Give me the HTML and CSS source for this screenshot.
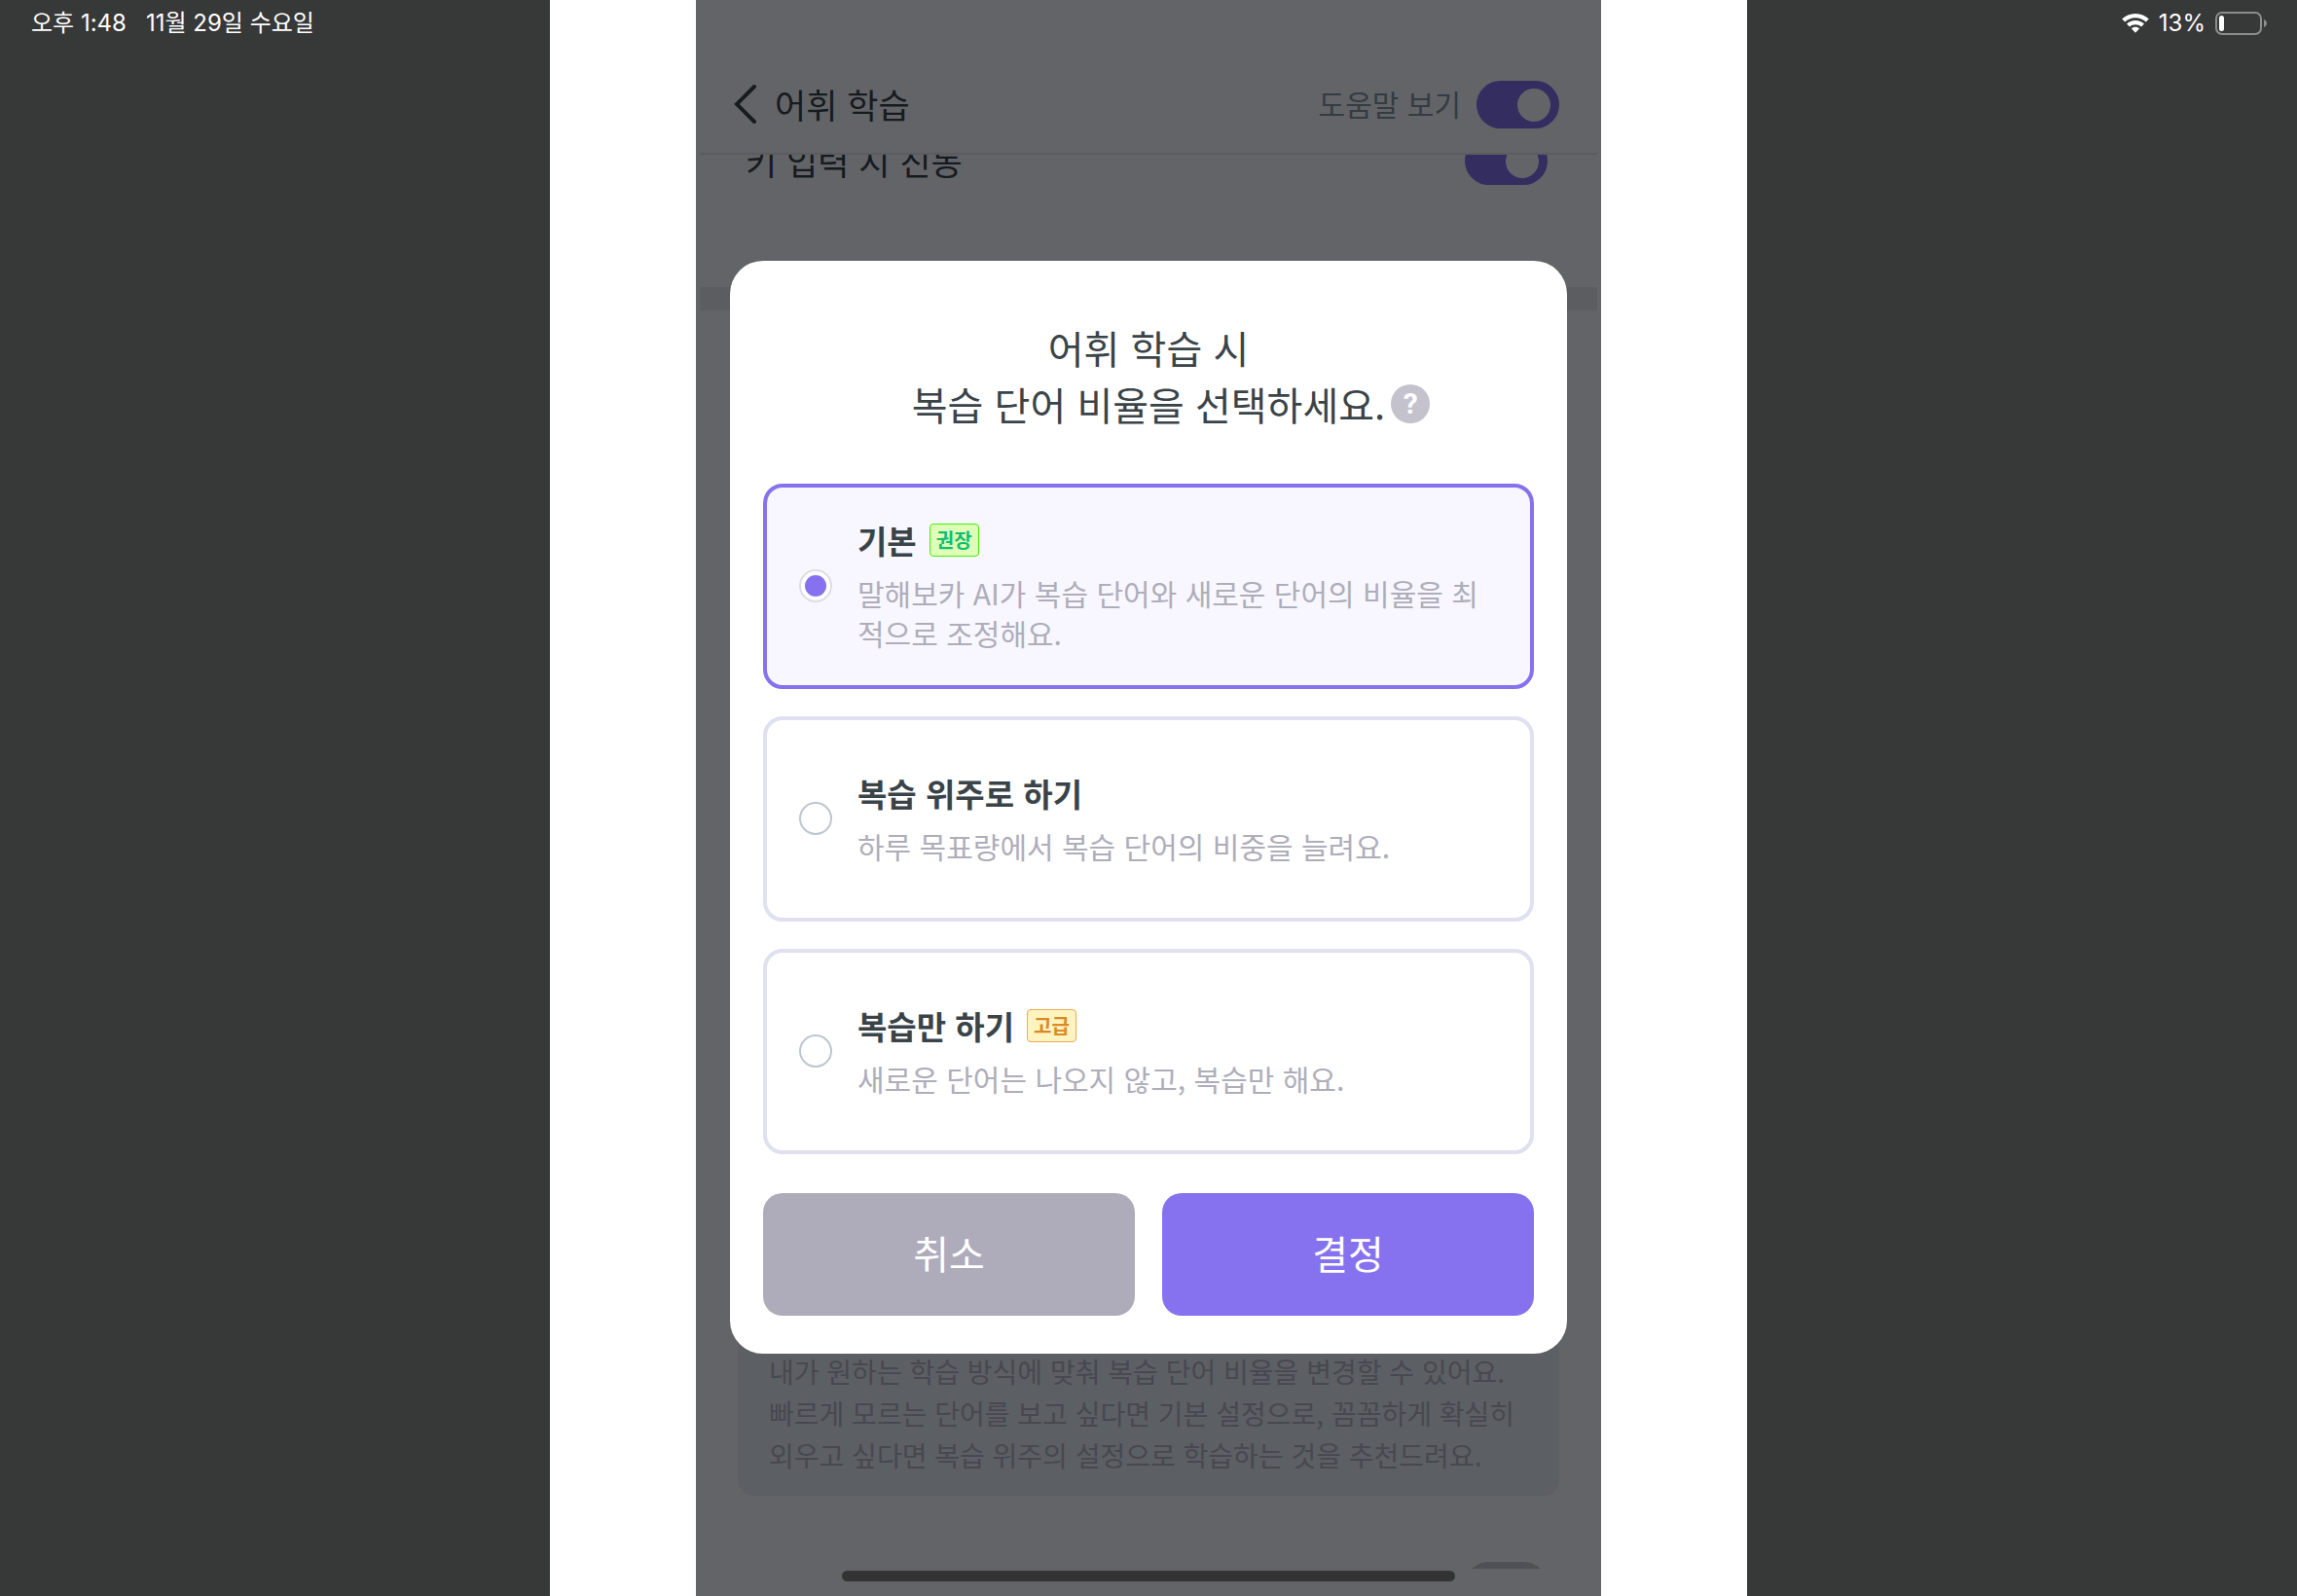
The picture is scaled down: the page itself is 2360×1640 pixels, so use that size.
FILE: index.html
```html
<!DOCTYPE html>
<html lang="ko">
<head>
<meta charset="utf-8">
<meta name="viewport" content="width=device-width, initial-scale=1">
<title>어휘 학습</title>
<link rel="stylesheet" href="styles.css">
</head>
<body>
<div class="status-bar">
  <div class="status-group status-left">
    <span>오후 1:48</span>
    <span>11월 29일 수요일</span>
  </div>
  <div class="status-group">
    <svg class="wifi" width="28" height="20" viewBox="0 0 28 20" aria-hidden="true">
      <path d="M14 0C8.600 0 3.700 2.100 0.200 5.600L3.200 8.600C6 5.800 9.800 4.200 14 4.200S22 5.800 24.800 8.600L27.800 5.600C24.300 2.100 19.400 0 14 0Z"/>
      <path d="M14 7C10.500 7 7.400 8.300 5 10.400L8 13.400C9.600 12 11.700 11.200 14 11.200S18.400 12 20 13.400L23 10.400C20.600 8.300 17.500 7 14 7Z"/>
      <path d="M14 13.800C12.400 13.800 10.900 14.400 9.800 15.300L14 19.700L18.200 15.300C17.100 14.400 15.600 13.800 14 13.800Z"/>
    </svg>
    <span>13%</span>
    <svg class="battery" width="54" height="24" viewBox="0 0 54 24" aria-hidden="true">
      <rect x="1" y="1" width="46" height="22" rx="6" fill="none" stroke="#8c8d8d" stroke-width="2"/>
      <rect x="4" y="4" width="5" height="16" rx="2.500" fill="#fff"/>
      <path d="M50 8C52 9 53 10.500 53 12S52 15 50 16Z" fill="#8c8d8d"/>
    </svg>
  </div>
</div>

<div class="stage">
  <div class="app">
    <header class="app-header">
      <a class="back" href="#" aria-label="뒤로">
        <svg width="26" height="42" viewBox="0 0 26 42" aria-hidden="true"><path d="M21 3L3 21L21 39" fill="none" stroke="#3a4448" stroke-width="4" stroke-linecap="round"/></svg>
      </a>
      <h1 class="app-title">어휘 학습</h1>
      <label class="help-label" for="help-toggle">도움말 보기</label>
      <input class="toggle" type="checkbox" id="help-toggle" checked>
    </header>
    <main class="settings">
      <div class="setting-row setting-row-first">
        <label class="setting-label" for="vibrate">키 입력 시 진동</label>
        <input class="toggle" type="checkbox" id="vibrate" checked>
      </div>
      <div class="divider"></div>
      <div class="setting-note">
        <p>내가 원하는 학습 방식에 맞춰 복습 단어 비율을 변경할 수 있어요.<br>빠르게 모르는 단어를 보고 싶다면 기본 설정으로, 꼼꼼하게 확실히<br>외우고 싶다면 복습 위주의 설정으로 학습하는 것을 추천드려요.</p>
      </div>
      <div class="setting-row setting-row-last">
        <input class="toggle" type="checkbox" id="next-setting" aria-label="설정">
      </div>
    </main>

    <div class="overlay">
      <form class="modal" role="dialog" aria-labelledby="modal-title">
        <h2 class="modal-title" id="modal-title">
          <span class="title-line">어휘 학습 시</span>
          <span class="title-line title-line-help">복습 단어 비율을 선택하세요.<button class="help" type="button" aria-label="도움말">?</button></span>
        </h2>
        <div class="options">
          <label class="option">
            <input class="radio" type="radio" name="ratio" checked>
            <span class="option-text">
              <span class="option-title">기본<span class="badge badge-green">권장</span></span>
              <span class="option-desc">말해보카 AI가 복습 단어와 새로운 단어의 비율을 최적으로 조정해요.</span>
            </span>
          </label>
          <label class="option">
            <input class="radio" type="radio" name="ratio">
            <span class="option-text">
              <span class="option-title">복습 위주로 하기</span>
              <span class="option-desc">하루 목표량에서 복습 단어의 비중을 늘려요.</span>
            </span>
          </label>
          <label class="option">
            <input class="radio" type="radio" name="ratio">
            <span class="option-text">
              <span class="option-title">복습만 하기<span class="badge badge-orange">고급</span></span>
              <span class="option-desc">새로운 단어는 나오지 않고, 복습만 해요.</span>
            </span>
          </label>
        </div>
        <div class="actions">
          <button class="action action-cancel" type="button">취소</button>
          <button class="action action-confirm" type="button">결정</button>
        </div>
      </form>
    </div>
    <div class="home-indicator"></div>
  </div>
</div>
</body>
</html>
```
FILE: styles.css
```css
* {
  box-sizing: border-box;
}

body {
  margin: 0;
  background: #373838;
  color: #3a4448;
  font-family: "Noto Sans CJK KR", "Noto Sans", sans-serif;
}

h1, h2, p {
  margin: 0;
  font-weight: 400;
}

input, button {
  margin: 0;
  font-family: inherit;
}

/* Status bar lies over the page */
.status-bar {
  position: absolute;
  top: 0;
  left: 0;
  right: 0;
  z-index: 2;
  display: flex;
  justify-content: space-between;
  height: 48px;
  padding: 0 30px 0 32px;
  color: #fff;
  font: 24px/48px Inter, "Noto Sans CJK KR", sans-serif;
}

.status-group {
  display: flex;
  align-items: center;
  gap: 10px;
}

.status-left {
  gap: 20px;
}

.wifi {
  fill: #fff;
}

.stage {
  width: min(100%, 1230px);
  margin: 0 auto;
  background: #fff;
}

.app {
  position: relative;
  display: flex;
  flex-direction: column;
  width: min(100%, 930px);
  height: 100vh;
  margin: 0 auto;
  padding: 0 4px 28px;
  overflow: hidden;
  background: #fff;
}

.app-header {
  display: flex;
  flex: none;
  align-items: center;
  height: 159px;
  padding: 57px 39px 0 35px;
  border-bottom: 2px solid #e8ebec;
}

.back {
  display: flex;
}

.app-title {
  margin-left: 16px;
  padding-bottom: 2px;
  font-size: 35px;
}

.help-label {
  margin: 0 16px 0 auto;
  padding-bottom: 2px;
  color: #88959f;
  font-size: 30px;
}

.toggle {
  flex: none;
  width: 85px;
  height: 49px;
  padding: 8px 9px;
  border-radius: 25px;
  background: #cfcfd4;
  appearance: none;
}

.toggle::before {
  display: block;
  width: 34px;
  height: 34px;
  border-radius: 50%;
  background: #fff;
  content: "";
}

.toggle:checked {
  background: #8672ee;
}

.toggle:checked::before {
  margin-left: auto;
}

/* Scrolled list: both ends are cut off by the viewport */
.settings {
  display: flex;
  flex: 1;
  flex-direction: column;
  min-height: 0;
  overflow: hidden;
}

.setting-row {
  display: flex;
  flex: none;
  align-items: center;
  justify-content: space-between;
  height: 49px;
  padding: 0 51px 0 47px;
}

.setting-row-first {
  margin-top: -18px;
}

.setting-row-last {
  justify-content: flex-end;
  margin: 68px 0 -42px;
}

.setting-label {
  padding-bottom: 2px;
  font-size: 35px;
}

.divider {
  flex: none;
  height: 24px;
  margin: 105px 0 40px;
  background: #ededed;
}

.setting-note {
  display: flex;
  flex: 1;
  flex-direction: column;
  justify-content: flex-end;
  margin: 0 39px;
  padding: 20px 32px;
  border-radius: 16px;
  background: #eef3f5;
  color: #b8b6c5;
  font-size: 28px;
  line-height: 43px;
  white-space: nowrap;
}

.overlay {
  position: absolute;
  inset: 0;
  display: flex;
  align-items: center;
  padding: 18px 35px 0;
  background: rgba(0, 2, 7, 0.61);
}

.home-indicator {
  position: absolute;
  bottom: 15px;
  left: 150px;
  right: 150px;
  height: 11px;
  border-radius: 6px;
  background: #333;
}

.modal {
  width: 100%;
  padding: 60px 34px 39px;
  border-radius: 34px;
  background: #fff;
}

.modal-title {
  margin-bottom: 53px;
  font-size: 40px;
  line-height: 58px;
}

.title-line {
  display: flex;
  align-items: center;
  justify-content: center;
}

.title-line-help {
  gap: 6px;
}

/* Balances the help button so that the text stays centred */
.title-line-help::before {
  width: 40px;
  content: "";
}

.help {
  width: 40px;
  height: 40px;
  padding: 0;
  border: 0;
  border-radius: 50%;
  background: #c4c2cc;
  color: #fff;
  font: 700 30px/40px Roboto, sans-serif;
}

.options {
  display: grid;
  gap: 28px;
}

.option {
  display: flex;
  align-items: center;
  gap: 26px;
  min-height: 211px;
  padding: 0 44px 0 33px;
  border: 4px solid #e0e0f0;
  border-radius: 20px;
}

.option:has(:checked) {
  border-color: #8672ee;
  background: #f8f7ff;
}

.radio {
  flex: none;
  width: 34px;
  height: 34px;
  padding: 4px;
  border: 2px solid #bcc6d1;
  border-radius: 50%;
  background: #fff;
  appearance: none;
}

.radio:checked {
  border-color: #dedde6;
}

.radio:checked::before {
  display: block;
  width: 22px;
  height: 22px;
  border-radius: 50%;
  background: #8672ee;
  content: "";
}

.option-text {
  display: grid;
  gap: 10px;
  padding-bottom: 2px;
}

.option-title {
  display: flex;
  align-items: center;
  gap: 13px;
  font-size: 33px;
  font-weight: 700;
  line-height: 48px;
}

.option-desc {
  color: #aeadba;
  font-size: 30px;
  line-height: 41px;
}

.badge {
  padding: 0 6px;
  border: 1px solid;
  border-radius: 4px;
  font-size: 20px;
  line-height: 32px;
}

.badge-green {
  border-color: #3df500;
  background: #dfffb8;
  color: #12bf70;
}

.badge-orange {
  border-color: #f0a850;
  background: #fff3c0;
  color: #d98a24;
}

.actions {
  display: grid;
  grid-template-columns: 1fr 1fr;
  gap: 28px;
  margin-top: 40px;
}

.action {
  height: 126px;
  padding: 0 0 4px;
  border: 0;
  border-radius: 20px;
  color: #fff;
  font-size: 40px;
}

.action-cancel {
  background: #aeacbb;
}

.action-confirm {
  background: #8672ee;
}
```
